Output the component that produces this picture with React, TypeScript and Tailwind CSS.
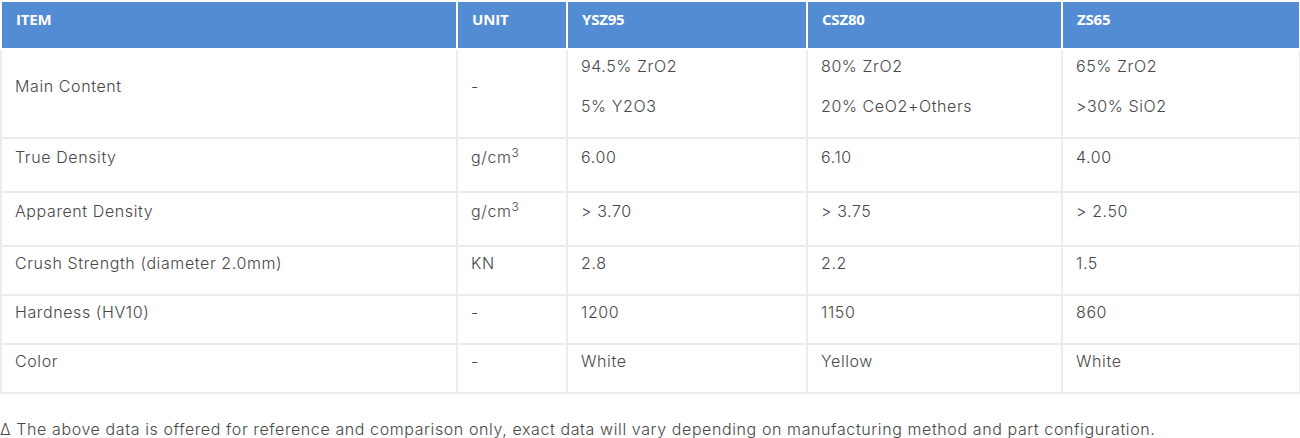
import React from "react";

type Row = { item: string; unit: React.ReactNode; vals: string[][]; tall?: boolean };

const cm3 = (
  <>
    g/cm<sup className="top-0 align-super text-[12px]">3</sup>
  </>
);

const rows: Row[] = [
  { item: "Main Content", unit: "-", vals: [["94.5% ZrO2", "5% Y2O3"], ["80% ZrO2", "20% CeO2+Others"], ["65% ZrO2", ">30% SiO2"]] },
  { item: "True Density", unit: cm3, vals: [["6.00"], ["6.10"], ["4.00"]], tall: true },
  { item: "Apparent Density", unit: cm3, vals: [["> 3.70"], ["> 3.75"], ["> 2.50"]], tall: true },
  { item: "Crush Strength (diameter 2.0mm)", unit: "KN", vals: [["2.8"], ["2.2"], ["1.5"]] },
  { item: "Hardness (HV10)", unit: "-", vals: [["1200"], ["1150"], ["860"]] },
  { item: "Color", unit: "-", vals: [["White"], ["Yellow"], ["White"]] },
];

const heads = ["ITEM", "UNIT", "YSZ95", "CSZ80", "ZS65"];

const td = "border-2 border-[#ececec] px-[13px] pt-[4px] pb-[3px] align-middle";

export default function App() {
  return (
    <div className="min-h-[438px] bg-white font-['Inter',sans-serif] text-[16px] font-light tracking-[0.6px] text-[#474747]">
      <table className="w-[1299px] table-fixed border-collapse">
        <colgroup>
          <col className="w-[456px]" />
          <col className="w-[110px]" />
          <col className="w-[240px]" />
          <col className="w-[255px]" />
          <col className="w-[238px]" />
        </colgroup>
        <thead>
          <tr className="h-[48px] bg-[#548cd4]">
            {heads.map((h) => (
              <th
                key={h}
                className="border-2 border-white px-[14px] pt-[6px] text-left align-top font-['Open_Sans',sans-serif] text-[15px] font-bold tracking-[-0.2px] text-white"
              >
                {h}
              </th>
            ))}
          </tr>
        </thead>
        <tbody>
          {rows.map((r) => {
            const lh = r.tall ? "leading-[29px]" : "leading-[24px]";
            return (
              <tr key={r.item}>
                <td className={td}>
                  <p className={`mb-[16px] ${lh}`}>{r.item}</p>
                </td>
                <td className={td}>
                  <p className={`mb-[16px] ${lh}`}>{r.unit}</p>
                </td>
                {r.vals.map((v, i) => (
                  <td key={i} className={td}>
                    {v.map((t) => (
                      <p key={t} className={`mb-[16px] ${lh}`}>
                        {t}
                      </p>
                    ))}
                  </td>
                ))}
              </tr>
            );
          })}
        </tbody>
      </table>
      <p className="mt-[23px] leading-[24px]">
        Δ The above data is offered for reference and comparison only, exact data will vary depending on manufacturing method and part configuration.
      </p>
    </div>
  );
}
